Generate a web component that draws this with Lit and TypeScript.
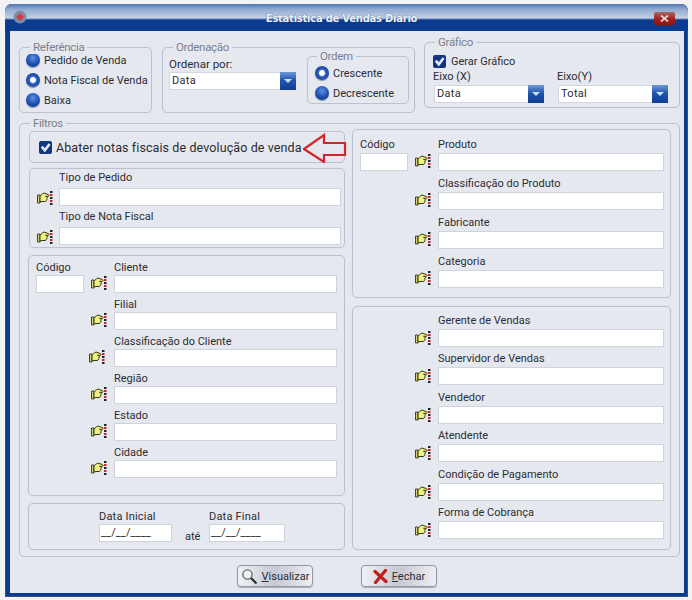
import { LitElement, html, css } from "lit";
import { customElement } from "lit/decorators.js";

const hand = html`<svg class="hand" viewBox="0 0 16 14" width="16" height="14">
  <path d="M0.5 4h2.5v8H0.5z" fill="#cfd27a" stroke="#34361a" stroke-width="0.9"/>
  <path d="M3 5l2.5-2.2 1.5-.8 4.6 1.7c.9.4.6 1.8-.4 1.6H8.5l1.6.7c.7.5.4 1.5-.3 1.6.4.7.1 1.4-.5 1.5.2.7-.2 1.4-.9 1.4H5L3 11z" fill="#f0f27e" stroke="#34361a" stroke-width="1"/>
  <path d="M13 0h2.5v2H13z" fill="#222"/><path d="M13 3h2.5v2H13z" fill="#c8262a"/><path d="M13 6h2.5v2H13z" fill="#222"/><path d="M13 9h2.5v2H13z" fill="#c8262a"/><path d="M13 12h2.5v2H13z" fill="#222"/>
</svg>`;

const check = html`<svg class="check" viewBox="0 0 13 13" width="13" height="13">
  <rect width="13" height="13" rx="2" fill="#12357f"/><path d="M2.8 5.6l3 3.8L10.6 3" fill="none" stroke="#dfe8f8" stroke-width="2.6"/>
</svg>`;

const lookup = (label: string, opts: { code?: boolean; shift?: boolean } = {}) => html`
  <div class="field">
    ${opts.code ? html`<span class="lbl code-lbl">Código</span><span class="input code-input"></span>` : null}
    <span class="lbl main-lbl">${label}</span>
    <span class="icon-cell ${opts.shift ? "shift" : ""}">${hand}</span>
    <span class="input main-input"></span>
  </div>`;

const radio = (label: string, on = false) => html`
  <div class="radio"><span class="ball ${on ? "on" : ""}"></span><span>${label}</span></div>`;

const combo = (value: string, cls: string) => html`
  <div class="combo ${cls}"><span class="combo-val">${value}</span><span class="combo-btn"><i></i></span></div>`;

@customElement("app-root")
export class AppRoot extends LitElement {
  static styles = css`
    :host { display: block; width: 692px; height: 600px; box-sizing: border-box; padding: 4px 4px 3px 5px; background: #f3f3f5;
      font-family: Roboto, "Liberation Sans", Arial, sans-serif; font-size: 11px; color: #2b2d33; overflow: hidden; }
    .window { height: 593px; display: flex; flex-direction: column; background: #0b3b8f; border-radius: 7px 7px 0 0; box-shadow: 0 0 0 1px #33507f inset; }
    .title { height: 27px; flex: none; display: flex; align-items: center; justify-content: center; position: relative;
      background: linear-gradient(#4f76b0 0, #8fa9d0 5px, #c2d0e6 14px, #0b3b8f 16px); border-radius: 7px 7px 0 0; }
    .title-text { font-family: "DejaVu Sans", sans-serif; font-weight: 700; font-size: 10px; letter-spacing: -0.25px; color: #eef2fa; margin-right: 10px; margin-top: 1px; text-shadow: 0 0 1px #1c3d78; }
    .logo { position: absolute; left: 7px; top: 6px; }
    .close { position: absolute; right: 13px; top: 8px; width: 21px; height: 13px; border-radius: 2px; background: linear-gradient(#a86a6a, #a01f1c 55%, #8a1513); display: flex; align-items: center; justify-content: center; }
    .client { flex: 1; margin: 0 4px 4px 5px; background: #e6e8ef; box-sizing: border-box; min-height: 0; }
    .top { height: 92px; display: flex; align-items: flex-start; padding-left: 9px; box-sizing: border-box; }
    .group { position: relative; box-sizing: border-box; border: 1px solid #bcc1cc; border-radius: 5px; box-shadow: 0 0 1px #d0d4dd; }
    .legend { position: absolute; left: 10px; top: -8px; padding: 0 3px; background: #e6e8ef; color: #7a808d; font-size: 11.5px; letter-spacing: -0.3px; line-height: 14px; }
    .ref { width: 133px; height: 66px; margin-top: 16px; padding: 2px 0 0 6px; }
    .radio { display: flex; align-items: center; gap: 4px; height: 20px; }
    .ball { width: 14px; height: 14px; border-radius: 50%; flex: none; background: radial-gradient(circle at 50% 35%, #5f8fe0, #1c4fb0 55%, #0b2a70 100%); box-shadow: 0 1px 1px #8b90a0; }
    .ball.on { background: radial-gradient(circle at 50% 50%, #fff 0, #fff 24%, #2a5fc0 38%, #0c2f7a 100%); }
    .ord { width: 253px; height: 66px; margin: 16px 0 0 10px; display: flex; padding-left: 6px; }
    .ord-left { padding-top: 9px; }
    .ord-lbl { display: block; height: 15px; line-height: 14px; font-size: 11.5px; }
    .combo { display: flex; height: 18px; background: #fff; box-shadow: 0 0 0 1px #d2d6de inset; }
    .combo-val { flex: 1; padding-left: 3px; line-height: 18px; letter-spacing: 0.3px; }
    .combo-btn { width: 16px; flex: none; background: linear-gradient(#6d9ad6, #1f55b0 45%, #0f3d92); display: flex; align-items: center; justify-content: center; }
    .combo-btn i { width: 0; height: 0; border: 4px solid transparent; border-top: 4px solid #cfe0f6; border-bottom: 0; }
    .combo-a { width: 127px; }
    .combo-b { width: 110px; margin-left: 1px; }
    .ordem { width: 102px; height: 48px; margin: 8px 0 0 auto; margin-right: 5px; padding: 6px 0 0 7px; }
    .legend.small { left: 9px; }
    .graf { width: 256px; height: 66px; margin: 11px 0 0 9px; padding: 12px 0 0 8px; }
    .gerar { display: flex; align-items: center; gap: 5px; height: 13px; }
    .axes { display: flex; gap: 13px; margin-top: 1px; }
    .ax-lbl { display: block; height: 16px; line-height: 16px; }
    .filtros { height: 434px; margin: 0 4px 0 9px; display: grid; grid-template-columns: 316px 319px; column-gap: 7px; padding: 7px 0 0 9px; align-items: start; }
    .col-l { display: flex; flex-direction: column; }
    .col-r { display: flex; flex-direction: column; gap: 8px; margin-top: -2px; }
    .abater { height: 32px; display: flex; align-items: center; gap: 4px; padding-left: 9px; width: 316px; }
    .abater-text { font-size: 12.5px; letter-spacing: 0.1px; color: #2a2c33; }
    .arrow { position: absolute; left: 273px; top: 1px; }
    .tipo { height: 80px; margin-top: 5px; padding: 2px 3px 0 7px; --cols: 22px 1fr; --lbl-gap: 3px; --row-gap: 4px; --hand-b: 1px; }
    .cliente { height: 241px; margin: 7px 0 0 -1px; padding: 5px 7px 0 7px; width: 317px; --cols: 48px 30px 1fr; --lbl-gap: 0px; --row-gap: 5px; --hand-b: 3px; }
    .prod { height: 169px; padding: 8px 6px 0 7px; --cols: 48px 30px 1fr; --lbl-gap: 1px; --row-gap: 6px; --hand-b: 3px; }
    .ger { height: 244px; padding: 7px 6px 0 7px; --cols: 48px 30px 1fr; --lbl-gap: 1px; --row-gap: 5.4px; --hand-b: 2px; }
    .rows { display: flex; flex-direction: column; gap: var(--row-gap); }
    .field { display: grid; grid-template-columns: var(--cols); grid-template-rows: calc(14px + var(--lbl-gap)) 18px; }
    .lbl { line-height: 14px; height: 14px; }
    .input { background: #fff; border: 1px solid #cfd3db; box-sizing: border-box; display: block; height: 18px; }
    .code-lbl { grid-column: 1; grid-row: 1; }
    .code-input { grid-column: 1; grid-row: 2; }
    .main-lbl { grid-column: -2; grid-row: 1; }
    .main-input { grid-column: -2; grid-row: 2; }
    .icon-cell { grid-column: -3; grid-row: 2; display: flex; align-items: flex-end; }
    .code-pad .icon-cell { padding-left: 7px; }
    .icon-cell.shift { margin-left: -2px; }
    .hand { display: block; margin-bottom: var(--hand-b); }
    .datas { height: 47px; margin: 7px 0 0 -1px; width: 317px; display: flex; align-items: flex-start; padding: 6px 0 0 70px; }
    .date-lbl { display: block; height: 14px; line-height: 14px; letter-spacing: 0.2px; }
    .date-input { width: 73px; height: 18px; background: #fff; border: 1px solid #cfd3db; display: block; padding-left: 1px; box-sizing: border-box; line-height: 16px; letter-spacing: 0.1px; }
    .date-b .date-input { width: 76px; }
    .ate { width: 14px; margin: 20px 10px 0 13px; }
    .buttons { display: flex; gap: 48px; padding: 8px 0 0 227px; }
    .btn { width: 76px; height: 22px; box-sizing: border-box; border: 1px solid #8f96a6; border-radius: 4px; display: flex; align-items: center; justify-content: center; gap: 4px;
      background: linear-gradient(90deg, #f0f1f5, #c6c9d2 50%, #eceef3); box-shadow: 0 1px 1px #aab; color: #2b2d33; font-size: 11px; }
    .btn u { text-underline-offset: 1px; }
  `;

  render() {
    return html`<div class="window">
      <div class="title">
        <svg class="logo" width="16" height="14" viewBox="0 0 16 14"><circle cx="8" cy="7" r="6.5" fill="#7f8ca6"/><path d="M8 3l4 4-4 4-4-4z" fill="#d23a48"/></svg>
        <span class="title-text">Estatística de Vendas Diário</span>
        <span class="close"><svg width="9" height="7" viewBox="0 0 9 7"><path d="M1 0.5l7 6M8 0.5l-7 6" stroke="#eed6d0" stroke-width="1.7"/></svg></span>
      </div>
      <div class="client">
        <div class="top">
          <div class="group ref">
            <span class="legend">Referência</span>
            ${radio("Pedido de Venda")}${radio("Nota Fiscal de Venda", true)}${radio("Baixa")}
          </div>
          <div class="group ord">
            <span class="legend">Ordenação</span>
            <div class="ord-left"><span class="ord-lbl">Ordenar por:</span>${combo("Data", "combo-a")}</div>
            <div class="group ordem">
              <span class="legend small">Ordem</span>
              ${radio("Crescente", true)}${radio("Decrescente")}
            </div>
          </div>
          <div class="group graf">
            <span class="legend">Gráfico</span>
            <div class="gerar">${check}<span>Gerar Gráfico</span></div>
            <div class="axes">
              <div><span class="ax-lbl">Eixo (X)</span>${combo("Data", "combo-b")}</div>
              <div><span class="ax-lbl">Eixo(Y)</span>${combo("Total", "combo-b")}</div>
            </div>
          </div>
        </div>
        <div class="group filtros">
          <span class="legend">Filtros</span>
          <div class="col-l">
            <div class="group abater">
              ${check}<span class="abater-text">Abater notas fiscais de devolução de venda</span>
              <svg class="arrow" width="44" height="30" viewBox="0 0 44 30"><path d="M1 16L21 2v8h21v12H21v7z" fill="#e6e8ef" stroke="#d3252c" stroke-width="2.2" stroke-linejoin="miter"/></svg>
            </div>
            <div class="group tipo rows">
              ${lookup("Tipo de Pedido")}${lookup("Tipo de Nota Fiscal")}
            </div>
            <div class="group cliente rows code-pad">
              ${lookup("Cliente", { code: true })}${lookup("Filial")}${lookup("Classificação do Cliente", { shift: true })}${lookup("Região")}${lookup("Estado")}${lookup("Cidade")}
            </div>
            <div class="group datas">
              <div><span class="date-lbl">Data Inicial</span><span class="date-input">__/__/____</span></div>
              <span class="ate">até</span>
              <div class="date-b"><span class="date-lbl">Data Final</span><span class="date-input">__/__/____</span></div>
            </div>
          </div>
          <div class="col-r">
            <div class="group prod rows code-pad">
              ${lookup("Produto", { code: true })}${lookup("Classificação do Produto")}${lookup("Fabricante")}${lookup("Categoria")}
            </div>
            <div class="group ger rows code-pad">
              ${lookup("Gerente de Vendas")}${lookup("Supervidor de Vendas")}${lookup("Vendedor")}${lookup("Atendente")}${lookup("Condição de Pagamento")}${lookup("Forma de Cobrança")}
            </div>
          </div>
        </div>
        <div class="buttons">
          <div class="btn">
            <svg width="17" height="17" viewBox="0 0 17 17"><circle cx="6.5" cy="6.5" r="4.6" fill="#eef2f6" stroke="#6a7078" stroke-width="1.4"/><path d="M10 10l5.5 5.5" stroke="#2a2a2a" stroke-width="2.2"/></svg>
            <span><u>V</u>isualizar</span>
          </div>
          <div class="btn">
            <svg width="15" height="15" viewBox="0 0 15 15"><path d="M2 2.5l11 10M12.5 1.5L2.5 13.5" stroke="#c01f1c" stroke-width="3.2" stroke-linecap="round"/></svg>
            <span><u>F</u>echar</span>
          </div>
        </div>
      </div>
    </div>`;
  }
}
